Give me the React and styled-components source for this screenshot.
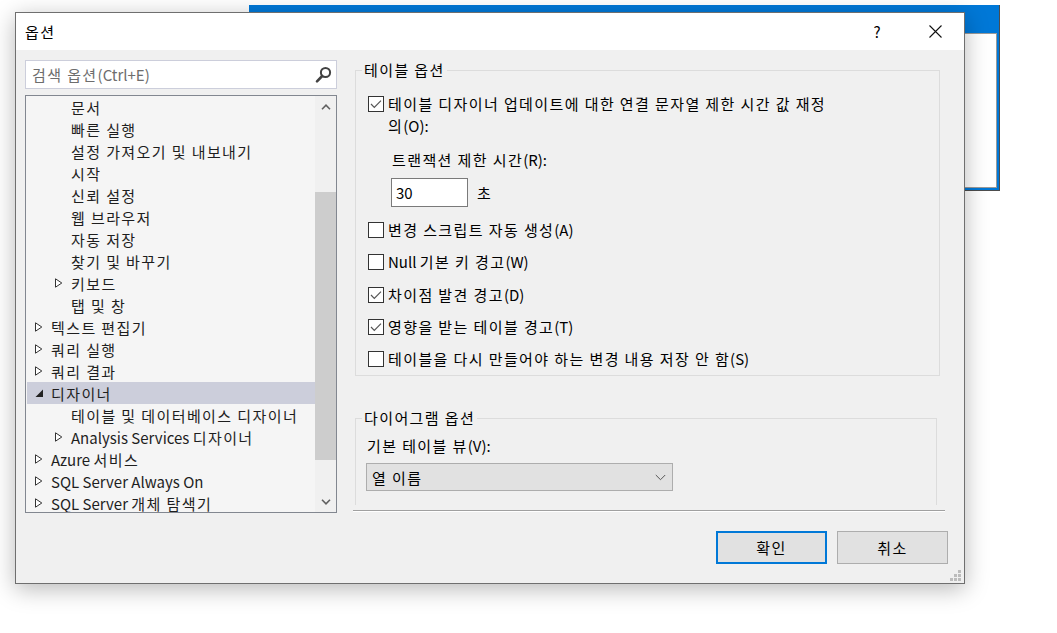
import React from 'react';
import styled, { createGlobalStyle } from 'styled-components';

const FONT = `"Noto Sans CJK KR", "Noto Sans", sans-serif`;

const Global = createGlobalStyle`
  html, body { margin: 0; padding: 0; background: #ffffff; }
  body { width: 1057px; height: 633px; overflow: hidden; font-family: ${FONT}; }
  * { box-sizing: border-box; }
`;

const Desktop = styled.div`
  position: relative;
  width: 1057px;
  height: 633px;
  overflow: hidden;
  background: #ffffff;
  font-family: ${FONT};
  font-size: 15px;
  color: #000;
`;

const Hangul = styled.span`
  letter-spacing: 1.4px;
`;

const HANGUL_RUN = /[\u3131-\u318E\uAC00-\uD7A3](?:[\u3131-\u318E\uAC00-\uD7A3 ]*[\u3131-\u318E\uAC00-\uD7A3])?/g;

const T = ({ children }) => {
  const text = String(children);
  const out = [];
  let last = 0;
  let m;
  HANGUL_RUN.lastIndex = 0;
  while ((m = HANGUL_RUN.exec(text)) !== null) {
    if (m.index > last) out.push(text.slice(last, m.index));
    out.push(<Hangul key={m.index}>{m[0]}</Hangul>);
    last = m.index + m[0].length;
  }
  if (last < text.length) out.push(text.slice(last));
  return <span>{out}</span>;
};

const BackWindow = styled.div`
  position: absolute;
  left: 249px;
  top: 5px;
  width: 751px;
  height: 186px;
  background: #0078d7;
  border-right: 1px solid #4d4d4d;
  border-bottom: 1px solid #4d4d4d;
  padding: 28px 2px 2px 2px;
  display: flex;
`;

const BackContent = styled.div`
  flex: 1;
  background: #ffffff;
  border: 1px solid #9a9a9a;
`;

const Dialog = styled.div`
  position: absolute;
  left: 15px;
  top: 12px;
  width: 950px;
  height: 572px;
  border: 1px solid #6f6f6f;
  background: #f0f0f0;
  box-shadow: 0 5px 22px rgba(0, 0, 0, 0.28);
  display: flex;
  flex-direction: column;
`;

const TitleBar = styled.div`
  height: 37px;
  background: #ffffff;
  display: flex;
  align-items: center;
  padding-left: 9px;
`;

const TitleText = styled.div`
  flex: 1;
  font-size: 15px;
  line-height: 20px;
  padding-top: 1px;
`;

const TitleButton = styled.div`
  width: 58px;
  height: 37px;
  display: flex;
  align-items: center;
  justify-content: center;
  font-size: 15px;
  color: #000;
`;

const Body = styled.div`
  flex: 1;
  display: flex;
  gap: 16px;
  padding: 10px 16px 0 9px;
`;

const LeftColumn = styled.div`
  width: 312px;
  display: flex;
  flex-direction: column;
  gap: 6px;
`;

const SearchBox = styled.div`
  height: 29px;
  background: #ffffff;
  border: 1px solid #cccedb;
  display: flex;
  align-items: center;
  padding: 0 4px 0 6px;
`;

const SearchPlaceholder = styled.div`
  flex: 1;
  color: #6d6d6d;
  font-size: 15px;
  line-height: 20px;
`;

const Tree = styled.div`
  height: 418px;
  border: 1px solid #828790;
  background: #f5f5f5;
  display: flex;
  overflow: hidden;
`;

const TreeList = styled.div`
  flex: 1;
  overflow: hidden;
  padding-left: 1px;
`;

const TreeRow = styled.div`
  height: 22px;
  display: flex;
  align-items: center;
  padding-left: ${p => 4 + (p.$level - 1) * 20}px;
  background: ${p => (p.$selected ? '#cccedb' : 'transparent')};
  color: #1e1e1e;
  font-size: 15px;
  white-space: nowrap;
`;

const ArrowSlot = styled.div`
  width: 20px;
  height: 22px;
  flex: none;
  display: flex;
  align-items: center;
  padding-left: 4px;
`;

const Scrollbar = styled.div`
  width: 21px;
  background: #f0f0f0;
  display: flex;
  flex-direction: column;
`;

const ScrollButton = styled.div`
  height: 21px;
  display: flex;
  align-items: center;
  justify-content: center;
`;

const ScrollTrack = styled.div`
  flex: 1;
  padding: 75px 0 31px 0;
  display: flex;
`;

const ScrollThumb = styled.div`
  flex: 1;
  background: #cdcdcd;
`;

const RightColumn = styled.div`
  width: 595px;
  display: flex;
  flex-direction: column;
`;

const Group = styled.fieldset`
  margin: ${p => p.$mt || 0}px ${p => p.$mr}px 0 2px;
  padding: 0 0 ${p => p.$pb}px 0;
  border: 1px solid #dcdcdc;
  ${p => (p.$open ? 'border-bottom: none;' : '')}
  min-width: 0;
`;

const Legend = styled.legend`
  margin-left: 6px;
  padding: 0 2px;
  font-size: 15px;
  line-height: 20px;
  color: #000;
`;

const CheckRow = styled.div`
  display: flex;
  align-items: flex-start;
  padding-left: 12px;
  margin-top: ${p => p.$mt}px;
`;

const CheckBoxBox = styled.div`
  width: 16px;
  height: 16px;
  margin-top: 3px;
  flex: none;
  background: #ffffff;
  border: 1px solid #333333;
  display: flex;
  align-items: center;
  justify-content: center;
`;

const CheckLabel = styled.div`
  margin-left: 4px;
  font-size: 15px;
  line-height: 22px;
  color: #000;
`;

const FieldLabel = styled.div`
  padding-left: ${p => p.$pl}px;
  margin-top: ${p => p.$mt}px;
  font-size: 15px;
  line-height: 22px;
`;

const InputRow = styled.div`
  display: flex;
  align-items: center;
  padding-left: 35px;
  margin-top: 7px;
  gap: 9px;
`;

const TextInput = styled.div`
  width: 77px;
  height: 29px;
  background: #ffffff;
  border: 1px solid #7a7a7a;
  padding-left: 4px;
  display: flex;
  align-items: center;
  font-size: 15px;
`;

const Combo = styled.div`
  margin: 6px 0 0 10px;
  width: 307px;
  height: 28px;
  background: #e1e1e1;
  border: 1px solid #adadad;
  display: flex;
  align-items: center;
  padding: 0 6px 0 5px;
  font-size: 15px;
`;

const ComboText = styled.div`
  flex: 1;
`;

const Separator = styled.div`
  margin: 5px 3px 0 0;
  height: 2px;
  border-top: 1px solid #a0a0a0;
  border-bottom: 1px solid #ffffff;
`;

const ButtonRow = styled.div`
  margin-top: 19px;
  display: flex;
  justify-content: flex-end;
  gap: 10px;
`;

const Button = styled.div`
  width: 111px;
  height: 33px;
  background: #e1e1e1;
  border: ${p => (p.$default ? '2px solid #0078d7' : '1px solid #adadad')};
  display: flex;
  align-items: center;
  justify-content: center;
  font-size: 15px;
  color: #000;
`;

const Grip = styled.svg`
  position: absolute;
  right: 3px;
  bottom: 2px;
`;

const treeItems = [
  { label: '문서', level: 2 },
  { label: '빠른 실행', level: 2 },
  { label: '설정 가져오기 및 내보내기', level: 2 },
  { label: '시작', level: 2 },
  { label: '신뢰 설정', level: 2 },
  { label: '웹 브라우저', level: 2 },
  { label: '자동 저장', level: 2 },
  { label: '찾기 및 바꾸기', level: 2 },
  { label: '키보드', level: 2, arrow: 'collapsed' },
  { label: '탭 및 창', level: 2 },
  { label: '텍스트 편집기', level: 1, arrow: 'collapsed' },
  { label: '쿼리 실행', level: 1, arrow: 'collapsed' },
  { label: '쿼리 결과', level: 1, arrow: 'collapsed' },
  { label: '디자이너', level: 1, arrow: 'expanded', selected: true },
  { label: '테이블 및 데이터베이스 디자이너', level: 2 },
  { label: 'Analysis Services 디자이너', level: 2, arrow: 'collapsed' },
  { label: 'Azure 서비스', level: 1, arrow: 'collapsed' },
  { label: 'SQL Server Always On', level: 1, arrow: 'collapsed' },
  { label: 'SQL Server 개체 탐색기', level: 1, arrow: 'collapsed' },
];

const checks = [
  { label: '변경 스크립트 자동 생성(A)', checked: false },
  { label: 'Null 기본 키 경고(W)', checked: false },
  { label: '차이점 발견 경고(D)', checked: true },
  { label: '영향을 받는 테이블 경고(T)', checked: true },
  { label: '테이블을 다시 만들어야 하는 변경 내용 저장 안 함(S)', checked: false },
];

const CollapsedArrow = () => (
  <svg width="8" height="10" viewBox="0 0 8 10">
    <path d="M0.5 0.8 L6.8 5 L0.5 9.2 Z" fill="#ffffff" stroke="#333" strokeWidth="1" />
  </svg>
);

const ExpandedArrow = () => (
  <svg width="9" height="9" viewBox="0 0 9 9">
    <path d="M8 0.5 L8 8 L0.5 8 Z" fill="#222" />
  </svg>
);

const CheckBox = ({ checked }) => (
  <CheckBoxBox>
    {checked && (
      <svg width="12" height="10" viewBox="0 0 12 10">
        <path d="M1 5 L4.3 8.3 L11 1.6" fill="none" stroke="#555" strokeWidth="1.2" />
      </svg>
    )}
  </CheckBoxBox>
);

export default function App() {
  return (
    <Desktop>
      <Global />
      <BackWindow>
        <BackContent />
      </BackWindow>
      <Dialog>
        <TitleBar>
          <TitleText><T>옵션</T></TitleText>
          <TitleButton>?</TitleButton>
          <TitleButton>
            <svg width="13" height="13" viewBox="0 0 13 13">
              <path d="M0.5 0.5 L12.5 12.5 M12.5 0.5 L0.5 12.5" stroke="#111" strokeWidth="1.1" />
            </svg>
          </TitleButton>
        </TitleBar>
        <Body>
          <LeftColumn>
            <SearchBox>
              <SearchPlaceholder><T>검색 옵션(Ctrl+E)</T></SearchPlaceholder>
              <svg width="18" height="18" viewBox="0 0 18 18">
                <circle cx="11.5" cy="6.5" r="4.6" fill="none" stroke="#424242" strokeWidth="2" />
                <path d="M8.2 10 L3 15.4" stroke="#424242" strokeWidth="2.6" strokeLinecap="round" />
              </svg>
            </SearchBox>
            <Tree>
              <TreeList>
                {treeItems.map(item => (
                  <TreeRow key={item.label} $level={item.level} $selected={item.selected}>
                    <ArrowSlot>
                      {item.arrow === 'collapsed' && <CollapsedArrow />}
                      {item.arrow === 'expanded' && <ExpandedArrow />}
                    </ArrowSlot>
                    <T>{item.label}</T>
                  </TreeRow>
                ))}
              </TreeList>
              <Scrollbar>
                <ScrollButton>
                  <svg width="10" height="6" viewBox="0 0 10 6">
                    <path d="M1 5.2 L5 1.2 L9 5.2" fill="none" stroke="#606060" strokeWidth="1.6" />
                  </svg>
                </ScrollButton>
                <ScrollTrack>
                  <ScrollThumb />
                </ScrollTrack>
                <ScrollButton>
                  <svg width="10" height="6" viewBox="0 0 10 6">
                    <path d="M1 0.8 L5 4.8 L9 0.8" fill="none" stroke="#606060" strokeWidth="1.6" />
                  </svg>
                </ScrollButton>
              </Scrollbar>
            </Tree>
          </LeftColumn>
          <RightColumn>
            <Group $mr={8} $pb={5}>
              <Legend><T>테이블 옵션</T></Legend>
              <CheckRow $mt={13}>
                <CheckBox checked />
                <CheckLabel>
                  <T>테이블 디자이너 업데이트에 대한 연결 문자열 제한 시간 값 재정</T>
                  <br />
                  <T>의(O):</T>
                </CheckLabel>
              </CheckRow>
              <FieldLabel $pl={36} $mt={12}><T>트랜잭션 제한 시간(R):</T></FieldLabel>
              <InputRow>
                <TextInput>30</TextInput>
                <T>초</T>
              </InputRow>
              {checks.map((c, i) => (
                <CheckRow key={c.label} $mt={i === 0 ? 12 : 10.3}>
                  <CheckBox checked={c.checked} />
                  <CheckLabel><T>{c.label}</T></CheckLabel>
                </CheckRow>
              ))}
            </Group>
            <Group $mt={32} $mr={11} $pb={14} $open>
              <Legend><T>다이어그램 옵션</T></Legend>
              <FieldLabel $pl={11} $mt={7}><T>기본 테이블 뷰(V):</T></FieldLabel>
              <Combo>
                <ComboText><T>열 이름</T></ComboText>
                <svg width="11" height="7" viewBox="0 0 11 7">
                  <path d="M0.8 1 L5.5 5.7 L10.2 1" fill="none" stroke="#555" strokeWidth="1" />
                </svg>
              </Combo>
            </Group>
            <Separator />
            <ButtonRow>
              <Button $default><T>확인</T></Button>
              <Button><T>취소</T></Button>
            </ButtonRow>
          </RightColumn>
        </Body>
        <Grip width="11" height="11" viewBox="0 0 11 11">
          <g fill="#bcbcbc">
            <rect x="8" y="0" width="3" height="3" />
            <rect x="4" y="4" width="3" height="3" />
            <rect x="8" y="4" width="3" height="3" />
            <rect x="0" y="8" width="3" height="3" />
            <rect x="4" y="8" width="3" height="3" />
            <rect x="8" y="8" width="3" height="3" />
          </g>
        </Grip>
      </Dialog>
    </Desktop>
  );
}
